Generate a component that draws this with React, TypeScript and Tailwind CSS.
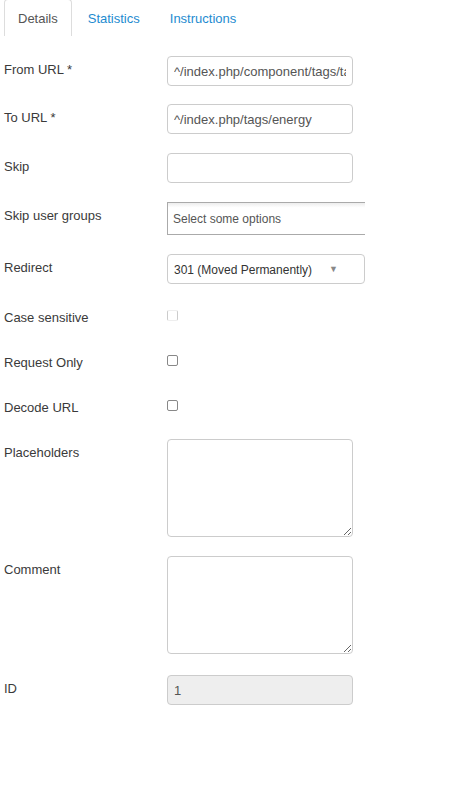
import React from "react";

const font = { fontFamily: '"Liberation Sans", Arial, sans-serif' };

function Label({ children }: { children: React.ReactNode }) {
  return (
    <div className="w-[167px] shrink-0 pl-[4px] pt-[4px] text-[13px] leading-[20px] text-[#3a3a3a]">
      {children}
    </div>
  );
}

function TextInput({ value, disabled }: { value?: string; disabled?: boolean }) {
  return (
    <input
      readOnly
      value={value ?? ""}
      className={
        "h-[30px] w-[186px] rounded-[4px] border border-[#ccc] px-[6px] pt-[1px] text-[13px] text-[#555] outline-none " +
        (disabled ? "bg-[#eee]" : "bg-white")
      }
      style={font}
    />
  );
}

function Check({ faint }: { faint?: boolean }) {
  return (
    <span
      className={
        "mt-[6px] block h-[11px] w-[11px] rounded-[2px] border " +
        (faint ? "border-[#ccc] border-t-[#eee] border-b-[#eee]" : "border-[#888]")
      }
    />
  );
}

export default function App() {
  return (
    <div className="min-h-[800px] w-[450px] overflow-hidden bg-white" style={font}>
      {/* tabs */}
      <ul className="flex h-[36px] pl-[4px] text-[13px]">
        <li className="flex h-[37px] -mt-[1px] items-center rounded-t-[4px] border border-b-0 border-[#ddd] px-[13px] pt-[2px] text-[#555]">
          Details
        </li>
        <li className="flex items-center px-[16px] pt-[1px] text-[#1e8bd0]">Statistics</li>
        <li className="flex items-center px-[14px] pt-[1px] text-[#1e8bd0]">Instructions</li>
      </ul>

      <div className="pt-[20px]">
        <div className="mb-[18px] flex items-start">
          <Label>From URL *</Label>
          <TextInput value="^/index.php/component/tags/tag/energy" />
        </div>
        <div className="mb-[19px] flex items-start">
          <Label>To URL *</Label>
          <TextInput value="^/index.php/tags/energy" />
        </div>
        <div className="mb-[19px] flex items-start">
          <Label>Skip</Label>
          <TextInput />
        </div>
        <div className="mb-[19px] flex items-start">
          <Label>Skip user groups</Label>
          <div className="flex h-[33px] w-[198px] items-center border border-r-0 border-[#aaa] bg-gradient-to-b from-[#eee] from-[1%] to-white to-[15%] px-[5px] pt-[1px] text-[12px] text-[#555]">
            Select some options
          </div>
        </div>
        <div className="mb-[20px] flex items-start">
          <Label>Redirect</Label>
          <div className="flex h-[30px] w-[198px] items-center justify-between rounded-[4px] border border-[#ccc] pl-[6px] pr-[26px] pt-[1px] text-[12px] text-[#333]">
            <span>301 (Moved Permanently)</span>
            <span className="text-[9px] text-[#888]">▼</span>
          </div>
        </div>
        <div className="mb-[25px] flex h-[20px] items-start">
          <Label>Case sensitive</Label>
          <Check faint />
        </div>
        <div className="mb-[25px] flex h-[20px] items-start">
          <Label>Request Only</Label>
          <Check />
        </div>
        <div className="mb-[25px] flex h-[20px] items-start">
          <Label>Decode URL</Label>
          <Check />
        </div>
        <div className="mb-[19px] flex items-start">
          <Label>Placeholders</Label>
          <textarea
            readOnly
            className="block h-[98px] w-[186px] rounded-[4px] border border-[#ccc] outline-none"
          />
        </div>
        <div className="mb-[21px] flex items-start">
          <Label>Comment</Label>
          <textarea
            readOnly
            className="block h-[98px] w-[186px] rounded-[4px] border border-[#ccc] outline-none"
          />
        </div>
        <div className="flex items-start">
          <Label>ID</Label>
          <TextInput value="1" disabled />
        </div>
      </div>
    </div>
  );
}
